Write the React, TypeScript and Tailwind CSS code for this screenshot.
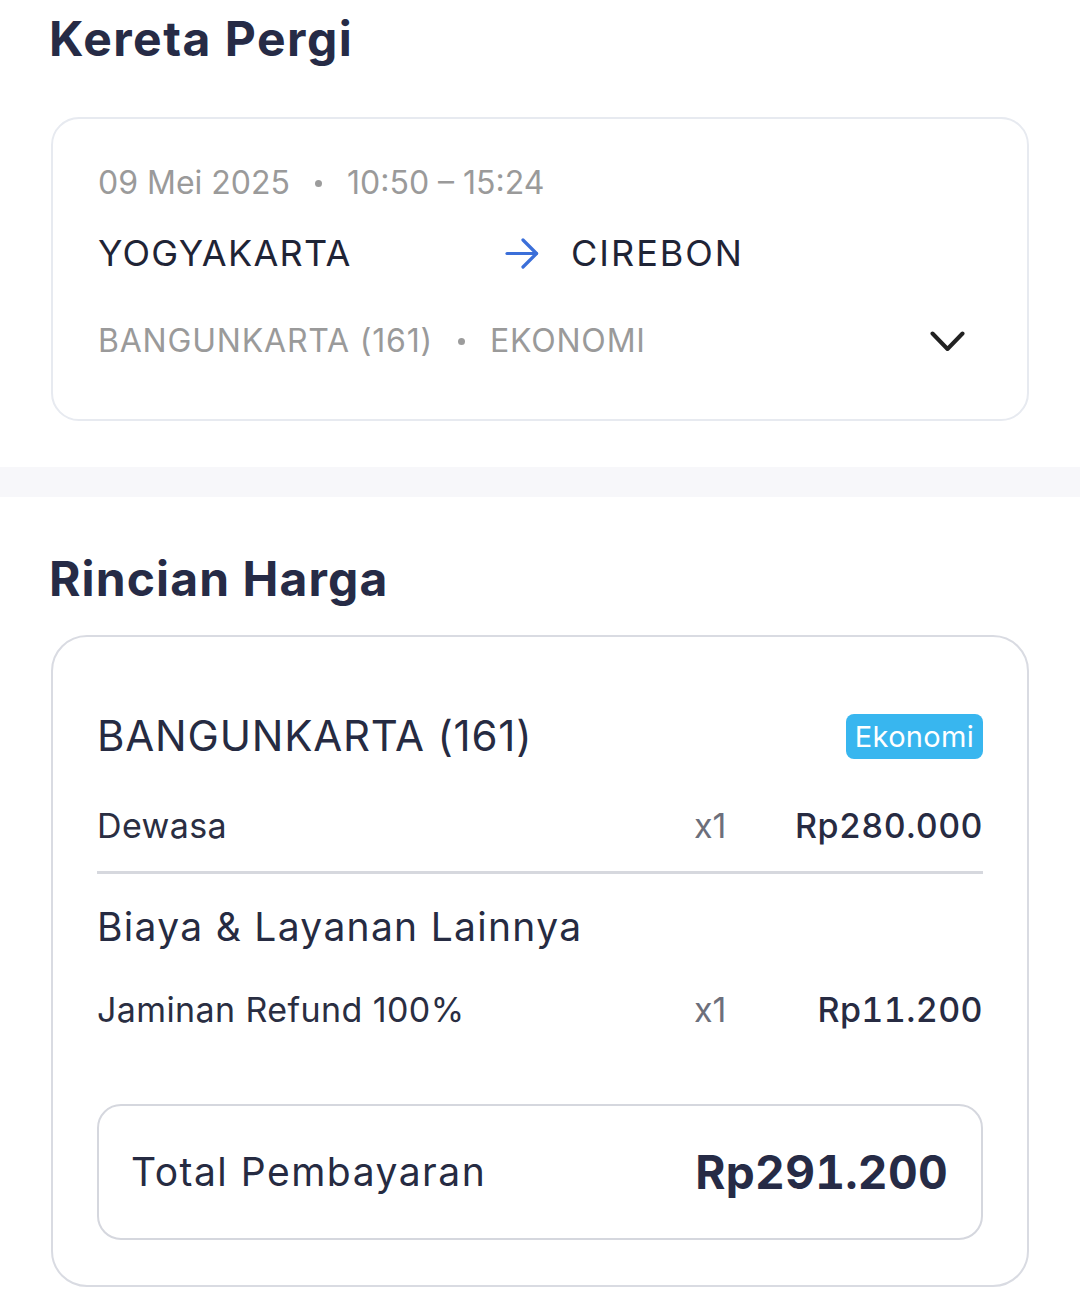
import React from "react";

const Dot = () => (
  <span className="mx-[25px] inline-block h-[7px] w-[7px] rounded-full bg-[#9c9c9c]" />
);

const Row = ({ label, price }: { label: string; price: string }) => (
  <div className="flex items-center text-[34px] leading-[44px]">
    <div className="flex-1 tracking-[0.4px] text-[#2a2e42]">{label}</div>
    <div className="w-[67px] text-[#6c6f7b]">x1</div>
    <div className="w-[222px] text-right font-medium tabular-nums tracking-[0.4px] text-[#272b42]">{price}</div>
  </div>
);

export default function App() {
  return (
    <div
      className="h-[1316px] w-[1080px] overflow-hidden bg-white"
      style={{ fontFamily: "Inter, 'Noto Sans', sans-serif" }}
    >
      <h1 className="pl-[49px] pt-[11px] text-[48px] font-bold leading-[56px] tracking-[1.5px] text-[#262b46]">
        Kereta Pergi
      </h1>

      <div className="mx-[51px] mt-[50px] rounded-[28px] border-2 border-[#e7eaf0] pb-[58px] pl-[45px] pr-[62px] pt-[44px]">
        <div className="flex items-center text-[32px] leading-[40px] text-[#9a9a9a]">
          <span>09 Mei 2025</span>
          <Dot />
          <span>10:50 – 15:24</span>
        </div>
        <div className="mt-[28px] flex items-center text-[36px] leading-[44px] tracking-[1.3px] text-[#1f2436]">
          <div className="w-[407px]">YOGYAKARTA</div>
          <svg width="34" height="31" viewBox="0 0 34 31" fill="none" stroke="#3b6fd9" strokeWidth="3.2" strokeLinecap="round" strokeLinejoin="round">
            <path d="M2 15.5 H31.5" />
            <path d="M18 2 L31.5 15.5 L18 29" />
          </svg>
          <div className="ml-[32px] tracking-[2px]">CIREBON</div>
        </div>
        <div className="mt-[46px] flex items-center justify-between text-[32px] leading-[40px] tracking-[0.8px] text-[#9a9a9a]">
          <div className="flex items-center">
            <span>BANGUNKARTA (161)</span>
            <Dot />
            <span>EKONOMI</span>
          </div>
          <svg width="35" height="21" viewBox="0 0 35 21" fill="none" stroke="#222222" strokeWidth="4" strokeLinecap="round" strokeLinejoin="round">
            <path d="M2.5 2.5 L17.5 18 L32.5 2.5" />
          </svg>
        </div>
      </div>

      <div className="mt-[46px] h-[30px] w-full bg-[#f7f7fa]" />

      <h2 className="mt-[54px] pl-[49px] text-[48px] font-bold leading-[56px] tracking-[1.1px] text-[#262b46]">
        Rincian Harga
      </h2>

      <div className="mx-[51px] mt-[28px] rounded-[36px] border-2 border-[#d9dbe2] px-[44px] pb-[45px] pt-[73px]">
        <div className="flex items-center justify-between">
          <div className="text-[42px] leading-[52px] tracking-[0.8px] text-[#262b42]">BANGUNKARTA (161)</div>
          <div className="flex h-[45px] items-center rounded-[8px] bg-[#38b6ef] px-[9px] text-[29px] leading-[45px] tracking-[0.3px] text-white">
            Ekonomi
          </div>
        </div>
        <div className="mt-[42px]">
          <Row label="Dewasa" price="Rp280.000" />
        </div>
        <div className="mt-[23px] h-[3px] w-full bg-[#d6d8de]" />
        <div className="mt-[29px] text-[39px] leading-[48px] tracking-[1.3px] text-[#262b42]">
          Biaya &amp; Layanan Lainnya
        </div>
        <div className="mt-[37px]">
          <Row label="Jaminan Refund 100%" price="Rp11.200" />
        </div>
        <div className="mt-[72px] flex h-[136px] items-center justify-between rounded-[24px] border-2 border-[#d5d7de] pl-[32px] pr-[33px]">
          <div className="text-[39px] leading-[48px] tracking-[1.5px] text-[#262b42]">Total Pembayaran</div>
          <div className="text-[46px] font-bold tabular-nums leading-[56px] tracking-[0.3px] text-[#262b46]">Rp291.200</div>
        </div>
      </div>
    </div>
  );
}
